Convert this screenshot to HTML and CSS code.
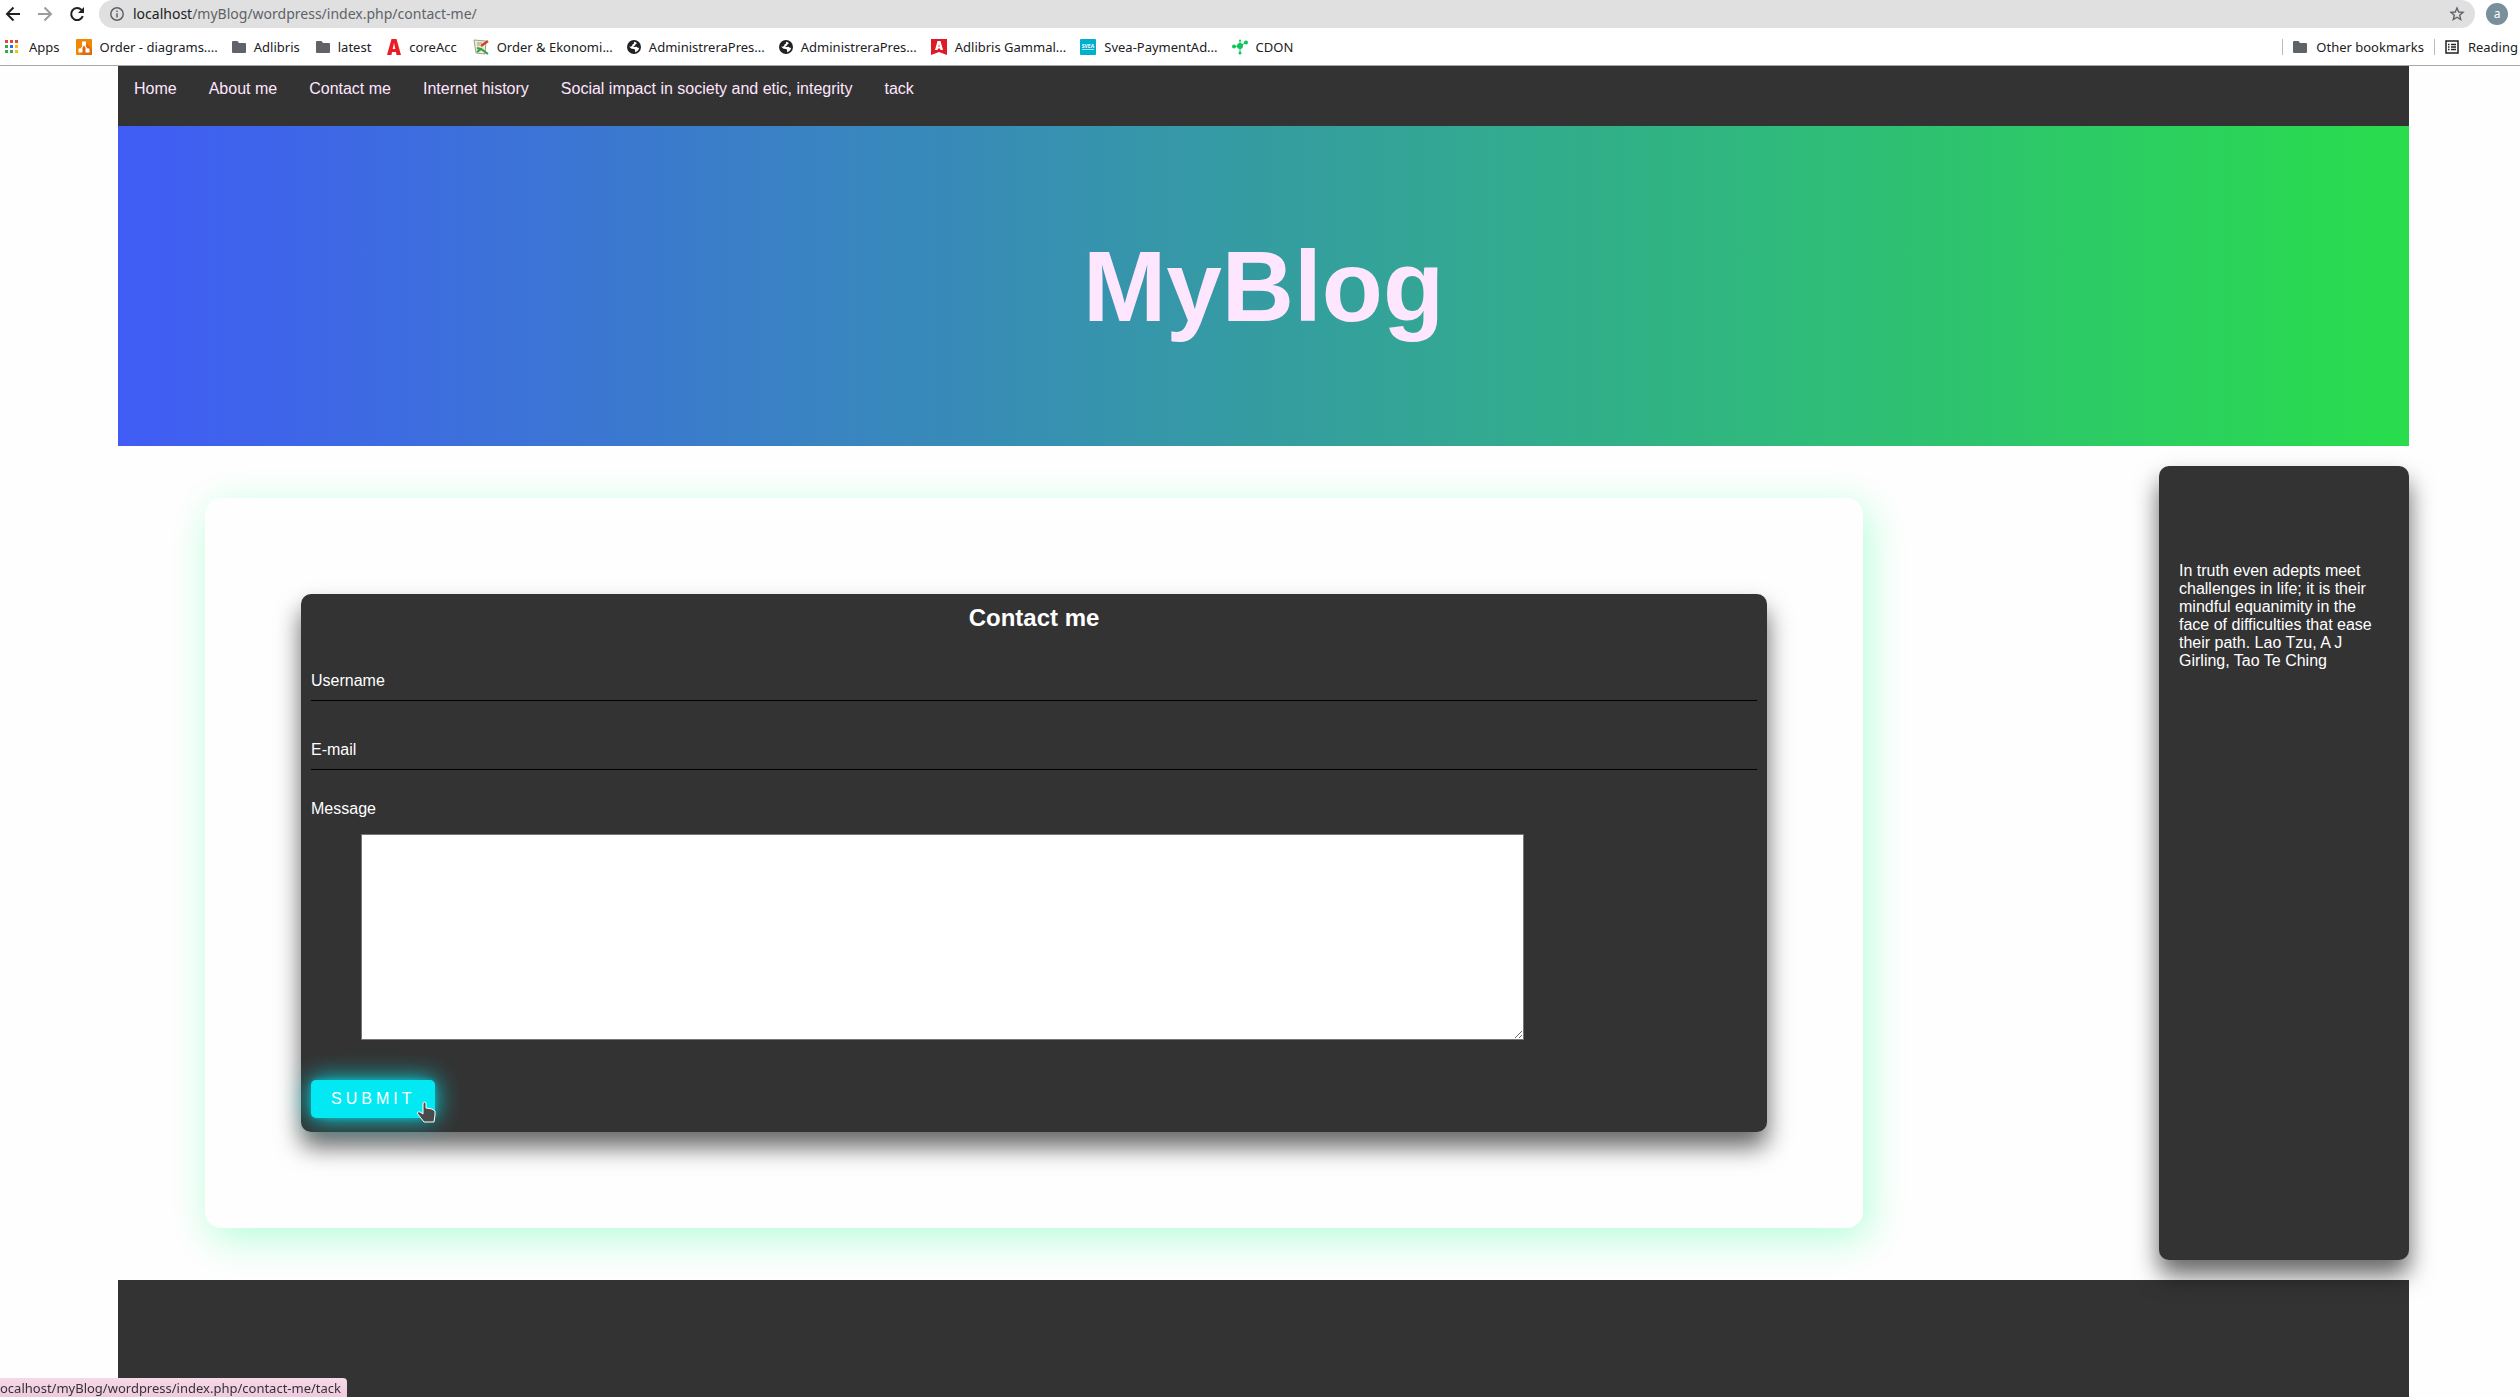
FILE: index.html
```html
<!DOCTYPE html>
<html lang="en">
<head>
<meta charset="utf-8">
<title>Contact me - MyBlog</title>
<link rel="stylesheet" href="styles.css">
</head>
<body>
<svg class="defs" aria-hidden="true">
  <symbol id="folder" viewBox="0 0 14 12"><path fill="#5f6368" d="M1 0h4.500l1.500 2h6q1 0 1 1v8q0 1-1 1h-12q-1 0-1-1v-10q0-1 1-1z"/></symbol>
  <symbol id="globe" viewBox="0 0 14 14"><circle cx="7" cy="7" r="7" fill="#202124"/><path fill="#fff" d="M7 1.800c1.500.4 2 .2 2.800 1.400L8.500 4.500l-.8 1.300-1.700.6 1.500.6 2-.2 1.700 1.200 1-.5-.5 2-1.500 1.700-2.200 1 .2-2-1-1.200-2.700-.2-2.500-2.300 1.700.2 1.500-.9.200-1.300 1.400-.7z"/></symbol>
</svg>

<header class="browser">
  <div class="toolbar">
    <button class="tool" aria-label="Back"><svg width="16" height="16" viewBox="0 0 16 16" fill="none" stroke="#202124" stroke-width="2"><path d="M15 8H3M8.500 1.500 2 8l6.500 6.500"/></svg></button>
    <button class="tool" aria-label="Forward"><svg width="16" height="16" viewBox="0 0 16 16" fill="none" stroke="#9a9c9e" stroke-width="2"><path d="M1 8H13M7.500 1.500 14 8l-6.500 6.500"/></svg></button>
    <button class="tool" aria-label="Reload"><svg width="16" height="16" viewBox="0 0 16 16"><path d="M13.800 10.200A6 6 0 1 1 12.500 3.900" fill="none" stroke="#202124" stroke-width="2"/><path fill="#202124" d="M15 1v6H9z"/></svg></button>
    <div class="address">
      <svg width="14" height="14" viewBox="0 0 14 14" fill="none" stroke="#5f6368"><circle cx="7" cy="7" r="6.200" stroke-width="1.500"/><path stroke-width="1.500" d="M7 6.200v4.300M7 3.500v1.500"/></svg>
      <span class="url"><b>localhost</b>/myBlog/wordpress/index.php/contact-me/</span>
      <button class="star" aria-label="Bookmark this page"><svg width="16" height="16" viewBox="0 0 16 16"><path fill="none" stroke="#5f6368" stroke-width="1.400" d="m8 2 1.700 4 4.300.4-3.300 2.800 1 4.300L8 11.200l-3.700 2.300 1-4.300L2 6.400 6.300 6z"/></svg></button>
    </div>
    <span class="avatar">a</span>
  </div>
  <nav class="bookmarks" aria-label="Bookmarks">
    <a href="#" class="apps"><svg width="14" height="14" viewBox="0 0 14 14"><g fill="#ea4335"><path d="M0 0h3v3H0zM5 0h3v3H5zM10 0h3v3h-3z"/></g><path fill="#34a853" d="M0 5h3v3H0zM0 10h3v3H0zM5 10h3v3H5z"/><path fill="#1a73e8" d="M5 5h3v3H5z"/><path fill="#fbbc04" d="M10 5h3v3h-3zM10 10h3v3h-3z"/></svg>Apps</a>
    <a href="#" class="elided"><svg width="16" height="16" viewBox="0 0 16 16"><rect width="16" height="16" rx="1" fill="#f08705"/><path fill="#df6c0c" d="m10 4 6 6v6H6l-3-3z"/><path fill="none" stroke="#fff" stroke-width="1.300" d="m8 5-3.500 6M8 5l3.500 6"/><path fill="#fff" d="M6 2.500h4v4H6zM2.500 9.500h4v4h-4zM9.500 9.500h4v4h-4z"/></svg>Order - diagrams....</a>
    <a href="#"><svg width="14" height="12"><use href="#folder"/></svg>Adlibris</a>
    <a href="#"><svg width="14" height="12"><use href="#folder"/></svg>latest</a>
    <a href="#"><svg width="14" height="16" viewBox="0 0 14 16"><path fill="#ed1c24" fill-rule="evenodd" d="M4.500 0h5L14 16H9.500L9 13H5l-.5 3H0zM7 4l-1.300 6h2.600z"/></svg>coreAcc</a>
    <a href="#" class="elided"><svg width="16" height="16" viewBox="0 0 16 16"><path fill="#f1ead2" stroke="#9aa38f" d="m1 1 12 1-1 13-9-1z"/><path fill="none" stroke="#a59974" d="M4 4h5M4 6h3"/><path fill="none" stroke="#2f9e44" stroke-width="2" d="m4 9 4 1 7 5M4 13l4-3"/><path stroke="#c9452c" stroke-width="2.500" d="m15 2-7 5"/></svg>Order &amp; Ekonomi...</a>
    <a href="#" class="elided"><svg width="14" height="14"><use href="#globe"/></svg>AdministreraPres...</a>
    <a href="#" class="elided"><svg width="14" height="14"><use href="#globe"/></svg>AdministreraPres...</a>
    <a href="#" class="elided"><svg width="16" height="16" viewBox="0 0 16 16"><path fill="#dd1a28" d="M0 0h16v16l-8-3-8 3z"/><path fill="#fff" fill-rule="evenodd" d="M6.500 2h3L12 11H9.500L9 9.500H7L6.500 11H4zM8 5l-.6 2.800h1.200z"/></svg>Adlibris Gammal...</a>
    <a href="#" class="elided"><svg width="16" height="16" viewBox="0 0 16 16"><rect width="16" height="16" rx="1" fill="#00aece"/><text x="8" y="9" text-anchor="middle" font-size="5" font-weight="700" fill="#fff">SVEA</text><path stroke="#a8e3ee" d="M2 10.500h12"/></svg>Svea-PaymentAd...</a>
    <a href="#"><svg width="16" height="16" viewBox="0 0 16 16" fill="#0bc65b"><path stroke="#0bc65b" d="M8 7 2 7.500M8 7l6-3.500M8 7V1.500M8 7v7"/><circle cx="8" cy="7" r="3"/><circle cx="2" cy="7.500" r="2"/><circle cx="14" cy="3.500" r="2"/><circle cx="8" cy="1.500" r="1"/><circle cx="8" cy="14" r="1.500"/></svg>CDON</a>
    <a href="#" class="other"><svg width="14" height="12"><use href="#folder"/></svg>Other bookmarks</a>
    <a href="#" class="reading"><svg width="14" height="14" viewBox="0 0 14 14" fill="none" stroke="#202124" stroke-width="1.500"><rect x="1" y="1" width="12" height="12"/><path d="M3 4.500h1.500M3 7h1.500M3 9.500h1.500M6 4.500h5M6 7h5M6 9.500h5"/></svg>Reading</a>
  </nav>
</header>

<div class="page">
  <nav class="menu" aria-label="Main">
    <a href="#">Home</a>
    <a href="#">About me</a>
    <a href="#">Contact me</a>
    <a href="#">Internet history</a>
    <a href="#">Social impact in society and etic, integrity</a>
    <a href="#">tack</a>
  </nav>
  <div class="banner"><h1>MyBlog</h1></div>
  <div class="columns">
    <main class="card">
      <form class="contact">
        <h2>Contact me</h2>
        <div class="field">
          <label for="username">Username</label>
          <input id="username" type="text">
        </div>
        <div class="field">
          <label for="email">E-mail</label>
          <input id="email" type="email">
        </div>
        <label class="message-label" for="message">Message</label>
        <textarea id="message"></textarea>
        <div class="actions">
          <button class="submit" type="button">SUBMIT</button>
          <svg class="pointer" width="20" height="22" viewBox="0 0 20 22"><path fill="#4a4a4a" stroke="#fff" stroke-linejoin="round" d="M7 2q2-2 3 0v5l6 1 3 2v4l-1 7H8l-7-9q2-2 3-1l3 2z"/></svg>
        </div>
      </form>
    </main>
    <aside class="quote">In truth even adepts meet challenges in life; it is their mindful equanimity in the face of difficulties that ease their path. Lao Tzu, A J Girling, Tao Te Ching</aside>
  </div>
  <footer class="footer"></footer>
</div>
<div class="status">ocalhost/myBlog/wordpress/index.php/contact-me/tack</div>
</body>
</html>
```
FILE: styles.css
```css
* {
  box-sizing: border-box;
}

body {
  margin: 0;
  height: 100vh;
  display: flex;
  flex-direction: column;
  overflow: hidden;
  background: #fefefe;
  font: 16px/18px "Liberation Sans", Arial, sans-serif;
}

a {
  color: inherit;
  text-decoration: none;
}

svg {
  flex: none;
}

.defs {
  position: absolute;
  width: 0;
  height: 0;
}

/* Browser chrome */
.browser {
  flex: none;
  background: #fff;
  border-bottom: 1px solid #a9a9a9;
  color: #202124;
  font: 13px/18px "Noto Sans", sans-serif;
}

.toolbar {
  display: flex;
  align-items: center;
  height: 28px;
  padding: 0 12px 0 5px;
  gap: 16px;
}

.tool,
.star {
  display: flex;
  padding: 0;
  border: 0;
  background: none;
}

.address {
  flex: 1;
  display: flex;
  align-items: center;
  align-self: stretch;
  gap: 9px;
  margin: 0 -5px 0 -2px;
  padding: 0 10px 0 11px;
  border-radius: 14px;
  background: #e0e0e0;
}

.url {
  flex: 1;
  color: #5f6368;
  font-size: 14px;
}

.url b {
  color: #202124;
  font-weight: 400;
}

.avatar {
  width: 22px;
  height: 22px;
  border-radius: 50%;
  background: #78909c;
  color: #fff;
  font-size: 12px;
  line-height: 21px;
  text-align: center;
}

.bookmarks {
  display: flex;
  align-items: center;
  height: 37px;
  padding-left: 5px;
  gap: 16px;
  white-space: nowrap;
}

.bookmarks a {
  display: flex;
  align-items: center;
  gap: 8px;
}

.bookmarks .apps {
  gap: 10px;
}

.bookmarks .elided {
  margin-right: -2px;
}

.bookmarks .other {
  margin-left: auto;
}

.bookmarks .other,
.bookmarks .reading {
  padding-left: 11px;
  gap: 9px;
  background: linear-gradient(#bbb, #bbb) left / 1px 16px no-repeat;
}

.bookmarks .other {
  margin-right: -6px;
}

.bookmarks .reading {
  padding-right: 2px;
}

/* Blog page */
.page {
  flex: 1;
  display: flex;
  flex-direction: column;
  padding: 0 111px 0 118px;
}

.menu {
  display: flex;
  gap: 32px;
  height: 60px;
  flex: none;
  padding: 14px 16px;
  background: #333;
  color: #ffe6ff;
}

.banner {
  display: grid;
  place-items: center;
  flex: none;
  height: 320px;
  background: linear-gradient(to right, #405cf5, #29dd4d);
}

.banner h1 {
  margin: 0;
  color: #ffe6ff;
  font-size: 100px;
  line-height: 114px;
}

.columns {
  display: flex;
  justify-content: space-between;
  align-items: stretch;
  padding: 20px 0;
}

.card {
  flex: 1;
  margin: 32px 296px 32px 87px;
  padding: 96px;
  border-radius: 16px;
  background: #fefefe;
  box-shadow: 5px 10px 40px rgba(0, 255, 128, 0.3);
}

.contact {
  display: flex;
  flex-direction: column;
  padding: 10px 10px 14px;
  border-radius: 10px;
  background: #333;
  box-shadow: 0 15px 25px rgba(0, 0, 0, 0.6);
  color: #fff;
}

.contact h2 {
  margin: 0 0 30px;
  font-size: 24px;
  line-height: 28px;
  text-align: center;
}

.field {
  position: relative;
  margin-bottom: 30px;
}

.field label {
  position: absolute;
  top: 0;
  left: 0;
  padding: 10px 0;
}

.field input {
  display: block;
  width: 100%;
  height: 39px;
  padding: 10px 0;
  border: 0;
  border-bottom: 1px solid #000;
  background: transparent;
  color: #fff;
  font: inherit;
}

.message-label {
  margin-bottom: 16px;
}

.contact textarea {
  width: 1163px;
  max-width: 100%;
  height: 206px;
  margin: 0 0 40px 50px;
  border: 1px solid #767676;
  background: #fff;
}

.actions {
  position: relative;
  display: flex;
}

.submit {
  height: 38px;
  padding: 10px 20px;
  border: 0;
  border-radius: 5px;
  background: #03e9f4;
  box-shadow: 0 0 5px rgba(3, 233, 244, 0.4), 0 0 25px #03e9f4;
  color: #fff;
  font: inherit;
  letter-spacing: 4px;
}

.pointer {
  position: absolute;
  top: 21px;
  left: 105px;
}

.quote {
  flex: none;
  width: 250px;
  padding: 96px 20px;
  border-radius: 10px;
  background: #333;
  box-shadow: 0 15px 25px rgba(0, 0, 0, 0.6);
  color: #fff;
  z-index: 1;
}

.footer {
  flex: 1;
  background: #333;
}

.status {
  position: fixed;
  left: 0;
  bottom: 0;
  padding: 1px 6px 0 0;
  border-radius: 0 4px 0 0;
  background: linear-gradient(#f6d9e7, #efc9df);
  color: #333;
  font: 13px/18px "Noto Sans", sans-serif;
  white-space: nowrap;
  z-index: 2;
}
```
